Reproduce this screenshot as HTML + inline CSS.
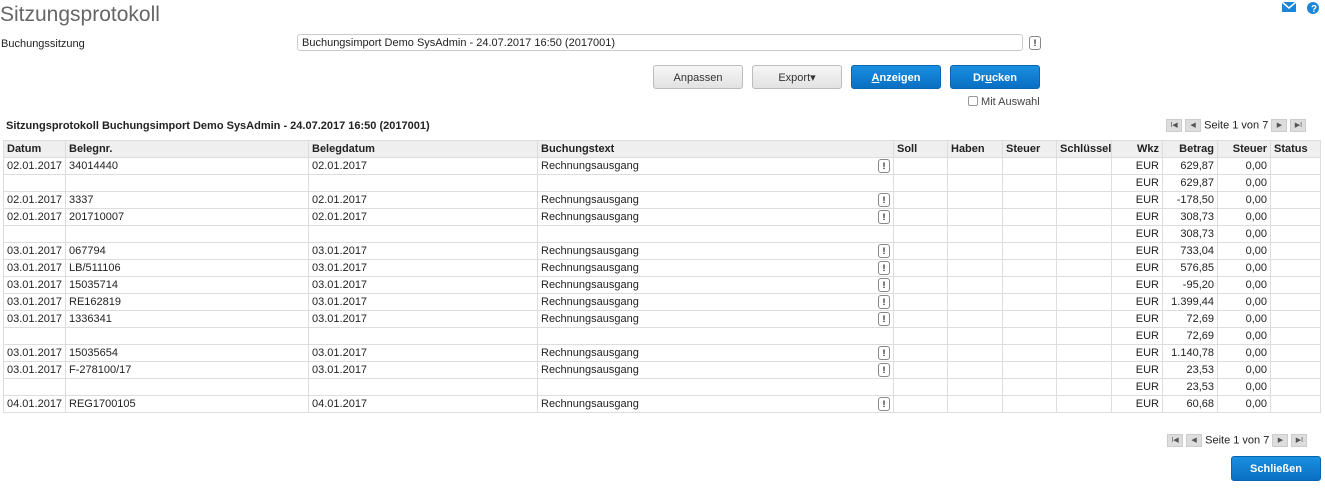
<!DOCTYPE html><html><head><style>
body{margin:0;width:1325px;height:489px;background:#fff;font-family:"Liberation Sans",Arial,sans-serif;font-size:11px;color:#222;position:relative;overflow:hidden}
.a{position:absolute}
.btn{position:absolute;top:65px;height:24px;border-radius:3px;text-align:center;line-height:24px;font-size:11px;box-sizing:border-box}
.g{background:linear-gradient(#f6f6f6,#e2e2e2);border:1px solid #bbb;color:#333}
.b{background:linear-gradient(#1a8fe0,#0a6fc2);border:1px solid #0a65b0;color:#fff;font-weight:bold}
.ex{display:inline-block;width:10px;height:12px;border:1px solid #888;border-radius:3px;font-size:9px;line-height:12px;text-align:center;font-weight:bold;background:#fff}
table{position:absolute;left:3px;top:140px;width:1318px;border-collapse:collapse;table-layout:fixed}
td,th{border:1px solid #ddd;height:16px;padding:0 3px;white-space:nowrap;overflow:hidden;font-size:11px;line-height:16px}
td{position:relative}
td .ex{position:absolute;right:3px;top:1px}
th{background:#efefef;text-align:left;font-weight:bold}
.r{text-align:right}
.pg{position:absolute;font-size:11px}
.pb{display:inline-block;width:14px;height:11px;background:#ddd;border:1px solid #ccc;vertical-align:middle;font-size:7px;line-height:11px;text-align:center;color:#555}
</style></head><body>
<div class="a" style="left:0;top:3px;font-size:21px;color:#666">Sitzungsprotokoll</div>
<svg class="a" style="left:1282px;top:2px" width="14" height="10"><rect width="14" height="10" fill="#1a86d9"/><path d="M0 0L7 6L14 0" stroke="#fff" fill="none" stroke-width="1.5"/></svg>
<svg class="a" style="left:1306px;top:1px" width="14" height="14"><circle cx="7" cy="7" r="6" fill="#1a86d9"/><text x="5" y="11" font-size="10" fill="#fff" font-weight="bold" font-family="Liberation Sans">?</text></svg>
<div class="a" style="left:1px;top:38px">Buchungssitzung</div>
<div class="a" style="left:297px;top:34px;width:726px;height:17px;border:1px solid #ccc;border-radius:3px;box-sizing:border-box;padding:2px 4px;font-size:11px">Buchungsimport Demo SysAdmin - 24.07.2017 16:50 (2017001)</div>
<span class="ex a" style="left:1029px;top:36px">!</span>
<div class="btn g" style="left:653px;width:90px">Anpassen</div>
<div class="btn g" style="left:752px;width:90px">Export▾</div>
<div class="btn b" style="left:851px;width:90px"><u>A</u>nzeigen</div>
<div class="btn b" style="left:950px;width:90px">Dr<u>u</u>cken</div>
<div class="a" style="left:968px;top:96px;font-size:11px;color:#444"><span style="display:inline-block;width:8px;height:8px;border:1px solid #999;border-radius:2px;vertical-align:-1px"></span> Mit Auswahl</div>
<div class="a" style="left:6px;top:120px;font-weight:bold">Sitzungsprotokoll Buchungsimport Demo SysAdmin - 24.07.2017 16:50 (2017001)</div>
<div class="pg" style="left:1166px;top:119px"><span class="pb">I◀</span> <span class="pb">◀</span> Seite 1 von 7 <span class="pb">▶</span> <span class="pb">▶I</span></div>
<table>
<colgroup><col style="width:62px"><col style="width:243px"><col style="width:229px"><col style="width:356px"><col style="width:54px"><col style="width:55px"><col style="width:54px"><col style="width:55px"><col style="width:51px"><col style="width:55px"><col style="width:53px"><col></colgroup>
<tr><th>Datum</th><th>Belegnr.</th><th>Belegdatum</th><th>Buchungstext</th><th>Soll</th><th>Haben</th><th>Steuer</th><th>Schlüssel</th><th class="r">Wkz</th><th class="r">Betrag</th><th class="r">Steuer</th><th>Status</th></tr>
<tr><td>02.01.2017</td><td>34014440</td><td>02.01.2017</td><td>Rechnungsausgang<span class="ex">!</span></td><td></td><td></td><td></td><td></td><td class="r">EUR</td><td class="r">629,87</td><td class="r">0,00</td><td></td></tr>
<tr><td></td><td></td><td></td><td></td><td></td><td></td><td></td><td></td><td class="r">EUR</td><td class="r">629,87</td><td class="r">0,00</td><td></td></tr>
<tr><td>02.01.2017</td><td>3337</td><td>02.01.2017</td><td>Rechnungsausgang<span class="ex">!</span></td><td></td><td></td><td></td><td></td><td class="r">EUR</td><td class="r">-178,50</td><td class="r">0,00</td><td></td></tr>
<tr><td>02.01.2017</td><td>201710007</td><td>02.01.2017</td><td>Rechnungsausgang<span class="ex">!</span></td><td></td><td></td><td></td><td></td><td class="r">EUR</td><td class="r">308,73</td><td class="r">0,00</td><td></td></tr>
<tr><td></td><td></td><td></td><td></td><td></td><td></td><td></td><td></td><td class="r">EUR</td><td class="r">308,73</td><td class="r">0,00</td><td></td></tr>
<tr><td>03.01.2017</td><td>067794</td><td>03.01.2017</td><td>Rechnungsausgang<span class="ex">!</span></td><td></td><td></td><td></td><td></td><td class="r">EUR</td><td class="r">733,04</td><td class="r">0,00</td><td></td></tr>
<tr><td>03.01.2017</td><td>LB/511106</td><td>03.01.2017</td><td>Rechnungsausgang<span class="ex">!</span></td><td></td><td></td><td></td><td></td><td class="r">EUR</td><td class="r">576,85</td><td class="r">0,00</td><td></td></tr>
<tr><td>03.01.2017</td><td>15035714</td><td>03.01.2017</td><td>Rechnungsausgang<span class="ex">!</span></td><td></td><td></td><td></td><td></td><td class="r">EUR</td><td class="r">-95,20</td><td class="r">0,00</td><td></td></tr>
<tr><td>03.01.2017</td><td>RE162819</td><td>03.01.2017</td><td>Rechnungsausgang<span class="ex">!</span></td><td></td><td></td><td></td><td></td><td class="r">EUR</td><td class="r">1.399,44</td><td class="r">0,00</td><td></td></tr>
<tr><td>03.01.2017</td><td>1336341</td><td>03.01.2017</td><td>Rechnungsausgang<span class="ex">!</span></td><td></td><td></td><td></td><td></td><td class="r">EUR</td><td class="r">72,69</td><td class="r">0,00</td><td></td></tr>
<tr><td></td><td></td><td></td><td></td><td></td><td></td><td></td><td></td><td class="r">EUR</td><td class="r">72,69</td><td class="r">0,00</td><td></td></tr>
<tr><td>03.01.2017</td><td>15035654</td><td>03.01.2017</td><td>Rechnungsausgang<span class="ex">!</span></td><td></td><td></td><td></td><td></td><td class="r">EUR</td><td class="r">1.140,78</td><td class="r">0,00</td><td></td></tr>
<tr><td>03.01.2017</td><td>F-278100/17</td><td>03.01.2017</td><td>Rechnungsausgang<span class="ex">!</span></td><td></td><td></td><td></td><td></td><td class="r">EUR</td><td class="r">23,53</td><td class="r">0,00</td><td></td></tr>
<tr><td></td><td></td><td></td><td></td><td></td><td></td><td></td><td></td><td class="r">EUR</td><td class="r">23,53</td><td class="r">0,00</td><td></td></tr>
<tr><td>04.01.2017</td><td>REG1700105</td><td>04.01.2017</td><td>Rechnungsausgang<span class="ex">!</span></td><td></td><td></td><td></td><td></td><td class="r">EUR</td><td class="r">60,68</td><td class="r">0,00</td><td></td></tr>
</table>
<div class="pg" style="left:1167px;top:434px"><span class="pb">I◀</span> <span class="pb">◀</span> Seite 1 von 7 <span class="pb">▶</span> <span class="pb">▶I</span></div>
<div class="btn b" style="left:1231px;top:456px;width:90px;height:25px">Schließen</div>
</body></html>
